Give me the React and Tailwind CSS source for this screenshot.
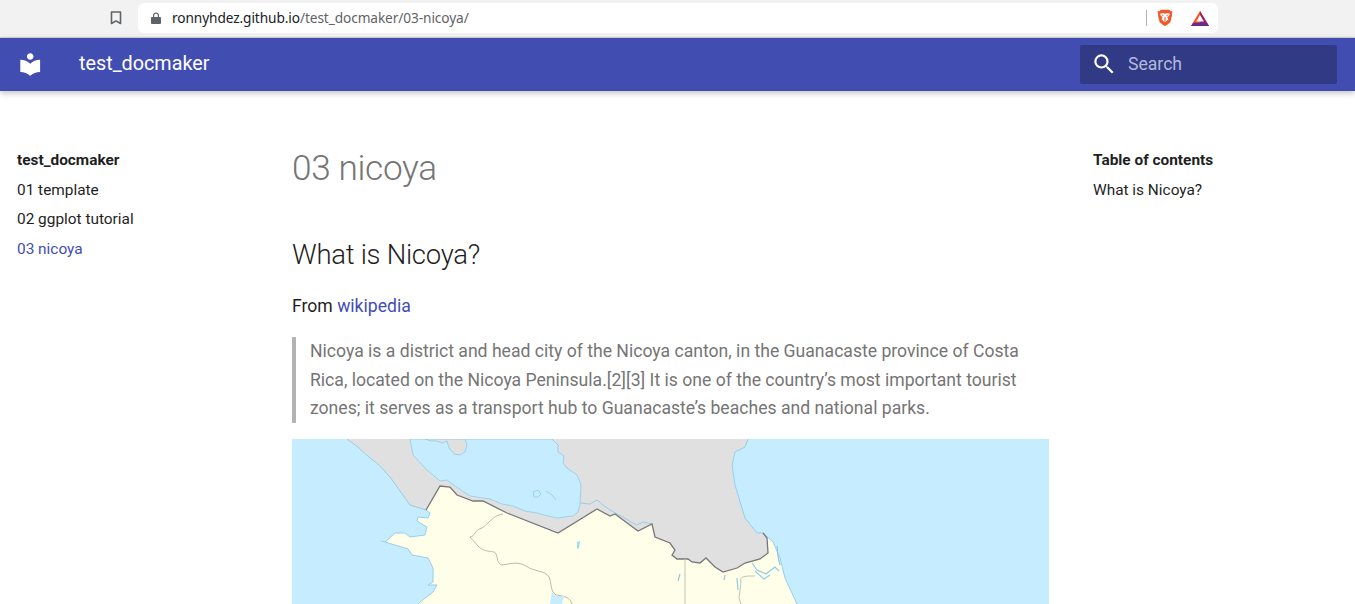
import React from 'react';

const Chrome = () => (
    <div className="h-[38px] bg-[#f2f2f2] border-b border-[#d4d4d4] flex items-start pt-[3px] pl-[110px]">
        <svg width="12" height="14" viewBox="0 0 12 14" className="mt-[8px] mr-[16px]">
            <path d="M1.5 1h9v11.5l-4.5-2.6-4.5 2.6z" fill="none" stroke="#5f6368" strokeWidth="1.6" strokeLinejoin="round" />
        </svg>
        <div className="w-[1080px] h-[30px] bg-white rounded-[6px] flex items-center pl-[13px]">
            <svg width="10" height="12" viewBox="0 0 10 12" className="mr-[11px] mb-[1px]">
                <path d="M1 5h1V3.4C2 1.7 3.3.6 5 .6s3 1.1 3 2.8V5h1c.5 0 1 .4 1 1v5c0 .6-.5 1-1 1H1c-.5 0-1-.4-1-1V6c0-.6.5-1 1-1zm2.2 0h3.6V3.4C6.8 2.4 6 1.7 5 1.7s-1.8.7-1.8 1.7z" fill="#5f6368" />
            </svg>
            <span className="font-['Noto_Sans',sans-serif] text-[13.7px] tracking-[-0.1px] text-[#202124]">
                ronnyhdez.github.io<span className="text-[#5f6368]">/test_docmaker/03-nicoya/</span>
            </span>
            <div className="ml-auto w-px h-[16px] bg-[#b0b0b0] mr-[10px]" />
            <svg width="16" height="18" viewBox="0 0 16 19" className="mr-[18px]">
                <path d="M3.5.8h9l1.4 1.6 1.6-.3.3 1.6-.7 1.4.4 1.6-1.9 7.2-3.9 3.2L8 18l-1.7-.9-3.9-3.2L.5 6.7l.4-1.6L.2 3.7.5 2.1l1.6.3z" fill="#f1582a" />
                <path d="M3.6 4.6l2.8-.2L8 5l1.6-.6 2.8.2.6 1.6-2.6 3 1.2 1.3-2.6 3H6.9l-2.6-3 1.2-1.3-2.6-3z" fill="#fff" />
                <path d="M4.6 6.2l2 .5-.6 1.2zM11.4 6.2l-2 .5.6 1.2zM7.4 8.6v4h1.2v-4z" fill="#f1582a" />
                <path d="M6.4 13.4h3.2L8 15.2z" fill="#f1582a" />
            </svg>
            <svg width="18" height="15" viewBox="0 0 18 15" className="mr-[9px]">
                <path d="M9 0l9 15H0z" fill="#ff4a1c" />
                <path d="M9 0l9 15H9z" fill="#9e1f63" />
                <path d="M0 15l2.2-3.2h13.6L18 15z" fill="#662d91" />
                <path d="M9 4l3.9 6.6H5.1z" fill="#fff" />
            </svg>
        </div>
    </div>
);

const Header = () => (
    <header className="h-[53px] bg-[#424db2] shadow-[0_2px_6px_rgba(0,0,0,0.25)] flex items-center pl-[17px] pr-[18px] relative">
        <svg viewBox="0 0 24 24" className="w-[26.4px] h-[26.4px] mr-[35.6px]">
            <path fill="#fff" d="M12 11.55C9.64 9.35 6.48 8 3 8v11c3.48 0 6.64 1.35 9 3.55 2.36-2.19 5.52-3.55 9-3.55V8c-3.48 0-6.64 1.35-9 3.55zM12 8c1.66 0 3-1.34 3-3s-1.34-3-3-3-3 1.34-3 3 1.34 3 3 3z" />
        </svg>
        <span className="text-white text-[19.8px] leading-[26px] mb-[1px]">test_docmaker</span>
        <div className="ml-auto w-[257px] h-[39px] bg-[#303a85] rounded-[2px] flex items-center pl-[10.6px]">
            <svg viewBox="0 0 24 24" className="w-[26.4px] h-[26.4px] mr-[11px]">
                <path fill="#fff" d="M15.5 14h-.79l-.28-.27A6.471 6.471 0 0 0 16 9.5 6.5 6.5 0 1 0 9.5 16c1.61 0 3.09-.59 4.23-1.57l.27.28v.79l5 4.99L20.49 19l-4.99-5zm-6 0C7.01 14 5 11.99 5 9.5S7.01 5 9.5 5 14 7.01 14 9.5 11.99 14 9.5 14z" />
            </svg>
            <span className="text-[17.6px] leading-[22px] mb-[2px] text-[#b3b8da]">Search</span>
        </div>
    </header>
);

const Sidebar = () => (
    <nav className="w-[292px] shrink-0 pl-[17px] pt-[60px] text-[15.4px] leading-[18px] text-[#1f1f1f]">
        <div className="font-bold mb-[11.5px]">test_docmaker</div>
        <div className="mb-[11.5px]">01 template</div>
        <div className="mb-[11.5px]">02 ggplot tutorial</div>
        <div className="text-[#3f4db5]">03 nicoya</div>
    </nav>
);

const Toc = () => (
    <aside className="pl-[44px] pt-[60px] text-[15.4px] leading-[18px] text-[#1f1f1f]">
        <div className="font-bold mb-[11.5px]">Table of contents</div>
        <div>What is Nicoya?</div>
    </aside>
);

// reference map, coordinates are page pixels
const NicoyaMap = () => (
    <svg viewBox="292 439 757 165" className="block w-[757px] h-[165px] bg-[#c6ecff]">
        <path d="M347 439L358 447 370 458 378 464 390 477 400 491 410 505 426 510 440 486 450 487 457 495 473 501 483 501 507 513 558 533 597 509 610 516 615 514 638 531 652 524 655 537 670 543 675 550 672 555 677 559 688 559 692 562 700 563 706 558 715 567 723 572 737 568 745 563 760 559 768 553 767 538 763 533 757 533 745 518 735 485 732 465 735 452 745 447 748 439Z" fill="#e0e0e0" />
        <path d="M410 439L413 455 427 470 440 481 447 480 455 486 470 496 490 499 502 504 513 506 525 511 537 513 548 516 557 518 573 516 578 512 580 504 581 485 577 475 567 468 563 463 564 456 558 452 558 445 552 439Z" fill="#c6ecff" stroke="#8fcbe6" strokeWidth="0.8" />
        <path d="M425 439L431 441 437 441 442 443 447 441 449 448 454 454 460 455 465 452 467 445 465 439Z" fill="#e0e0e0" stroke="#8fcbe6" strokeWidth="0.8" />
        <path d="M426 510L440 486 450 487 457 495 473 501 483 501 507 513 558 533 597 509 610 516 615 514 638 531 652 524 655 537 670 543 675 550 672 555 677 559 688 559 692 562 700 563 706 558 715 567 723 572 737 568 745 563 760 559 768 553 767 538 763 533 773 542 780 558 785 578 797 604 418 604 420 602 433 592 437 585 428 585 433 582 433 568 428 558 412 555 408 549 385 542 395 533 405 533 410 537 425 535 427 527 417 521 418 517 428 518 430 513Z" fill="#fefee9" />
        <path d="M347 439L358 447 370 458 378 464 390 477 400 491 410 505 426 510 430 513 428 518 418 517 417 521 427 527 425 535 410 537 405 533 395 533 385 542 408 549 412 555 428 558 433 568 433 582 428 585 437 585 433 592 420 602 418 604" fill="none" stroke="#8fcbe6" strokeWidth="0.9" />
        <path d="M763 533L773 542 780 558 785 578 797 604M763 533H757L745 518 735 485 732 465 735 452 745 447 748 439" fill="none" stroke="#8fcbe6" strokeWidth="0.9" />
        <path d="M580 503L590 504 597 500 603 505 610 510 623 517 631 522 637 525 643 522 652 524" fill="none" stroke="#8fcbe6" strokeWidth="0.9" />
        <path d="M426 510L440 486 450 487 457 495 473 501 483 501 507 513 558 533 597 509 610 516 615 514 638 531 652 524 655 537 670 543 675 550 672 555 677 559 688 559 692 562 700 563 706 558 715 567 723 572 737 568 745 563 760 559 768 553 767 538 763 533" fill="none" stroke="#777777" strokeWidth="1.3" />
        <path d="M503 514C495 514 488 524 482 528 474 530 476 536 470 537L478 546C484 552 490 551 494 552 499 554 495 563 502 565 510 564 518 561 526 566 534 572 545 570 549 577 552 584 550 591 556 595 564 596 570 597 572 604" fill="none" stroke="#b3b3a0" strokeWidth="0.9" />
        <path d="M685 559V604" fill="none" stroke="#c9c9b8" strokeWidth="1.1" />
        <path d="M755 576C745 576 739 576 741 582L739 598 741 604" fill="none" stroke="#b3b3a0" strokeWidth="0.8" />
        <path d="M752 563L757 570 766 574 775 567 779 571M755 571L764 579 770 575" fill="none" stroke="#8fcbe6" strokeWidth="1.1" />
        <path d="M777 546L778 556 780 565" fill="none" stroke="#8fcbe6" strokeWidth="1.3" />
        <path d="M533 492L538 490 541 494 538 497 534 497ZM546 491L552 495 556 500" fill="#c6ecff" stroke="#8fcbe6" strokeWidth="0.8" />
        <path d="M577 542L580 541 579 548 577 549Z" fill="#9fdcf5" />
        <path d="M552 592L556 596 564 596 562 604H550Z" fill="#c6ecff" />
        <path d="M680 574L678 581M725 575L724 580M737 578L738 590" fill="none" stroke="#8fcbe6" strokeWidth="1.2" />
        <path d="M381 541L385 542" stroke="#8fcbe6" strokeWidth="0.8" />
    </svg>
);

const Content = () => (
    <main className="w-[757px] shrink-0 pt-[55px] text-[17.6px] text-[#1f1f1f]">
        <h1 className="text-[35.2px] leading-[44px] tracking-[-0.35px] font-light text-[#757575]">03 nicoya</h1>
        <h2 className="text-[27.5px] leading-[35px] tracking-[-0.275px] font-light mt-[47px] text-[#1f1f1f]">What is Nicoya?</h2>
        <p className="mt-[20px] leading-[28.6px]">
            From <span className="text-[#3f4db5]">wikipedia</span>
        </p>
        <blockquote className="mt-[16.4px] border-l-4 border-[#b3b3b3] pl-[14px] leading-[28.6px] text-[#757575]">
            Nicoya is a district and head city of the Nicoya canton, in the Guanacaste province of Costa Rica, located on the Nicoya Peninsula.[2][3] It is one of the country’s most important tourist zones; it serves as a transport hub to Guanacaste’s beaches and national parks.
        </blockquote>
        <div className="mt-[16.6px]">
            <NicoyaMap />
        </div>
    </main>
);

export default function App() {
    return (
        <div className="h-[604px] overflow-hidden bg-white font-['Roboto',sans-serif]">
            <Chrome />
            <Header />
            <div className="flex">
                <Sidebar />
                <Content />
                <Toc />
            </div>
        </div>
    );
}
